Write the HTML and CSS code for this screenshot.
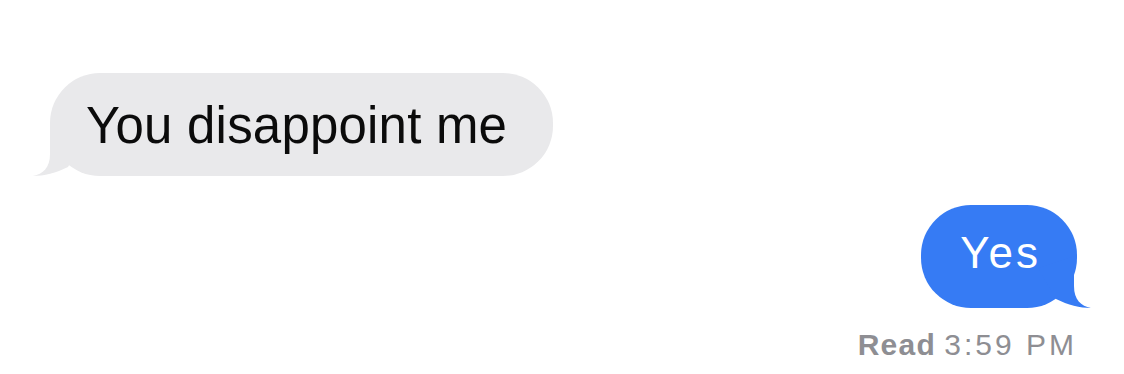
FILE: index.html
```html
<!DOCTYPE html>
<html lang="en">
<head>
    <meta charset="UTF-8">
    <meta name="viewport" content="width=device-width, initial-scale=1.0">
    <title>Messages</title>
    <link rel="stylesheet" href="styles.css">
</head>
<body>
    <div class="thread">
        <div class="msg msg-in">
            <div class="bubble bubble-in">
                You disappoint me
                <svg class="tail tail-in" viewBox="0 0 70 60" width="70" height="60">
                    <path d="M20,8 L20,38 C20,52 13,58 3,60 C14,60 26,57 38,51 L56,20 Z"/>
                </svg>
            </div>
        </div>

        <div class="msg msg-out">
            <div class="bubble bubble-out">
                Yes
                <svg class="tail tail-out" viewBox="0 0 70 60" width="70" height="60">
                    <path d="M20,8 L20,38 C20,52 13,58 3,60 C14,60 26,57 38,51 L56,20 Z"/>
                </svg>
            </div>
        </div>

        <div class="receipt"><b>Read</b> <span class="time">3:59 PM</span></div>
    </div>
</body>
</html>
```

FILE: styles.css
```css
* {
    margin: 0;
    padding: 0;
    box-sizing: border-box;
}

body {
    font-family: 'Liberation Sans', Arial, sans-serif;
    background: #fff;
}

.thread {
    display: flex;
    flex-direction: column;
    padding: 73px 47px 0 50px;
}

.msg {
    display: flex;
}

.msg-out {
    justify-content: flex-end;
    margin-top: 29px;
}

.bubble {
    position: relative;
    border-radius: 50px;
    height: 103px;
    white-space: nowrap;
}

.bubble-in {
    background: #e9e9eb;
    color: #0b0b0b;
    font-size: 51px;
    letter-spacing: 0.2px;
    line-height: 101px;
    padding: 2px 46px 0 36px;
}

.bubble-out {
    background: #367bf4;
    color: #fff;
    font-size: 44px;
    letter-spacing: 3px;
    line-height: 95px;
    padding: 0 36px 8px 39px;
}

.tail {
    position: absolute;
    bottom: 0;
}

.tail-in {
    left: -20px;
    fill: #e9e9eb;
}

.tail-out {
    right: -17px;
    fill: #367bf4;
    transform: scaleX(-1);
}

.receipt {
    align-self: flex-end;
    margin-top: 19px;
    color: #8e8e93;
    font-size: 30px;
    line-height: 36px;
}

.receipt b {
    letter-spacing: 1.2px;
}

.time {
    letter-spacing: 3px;
}
```
